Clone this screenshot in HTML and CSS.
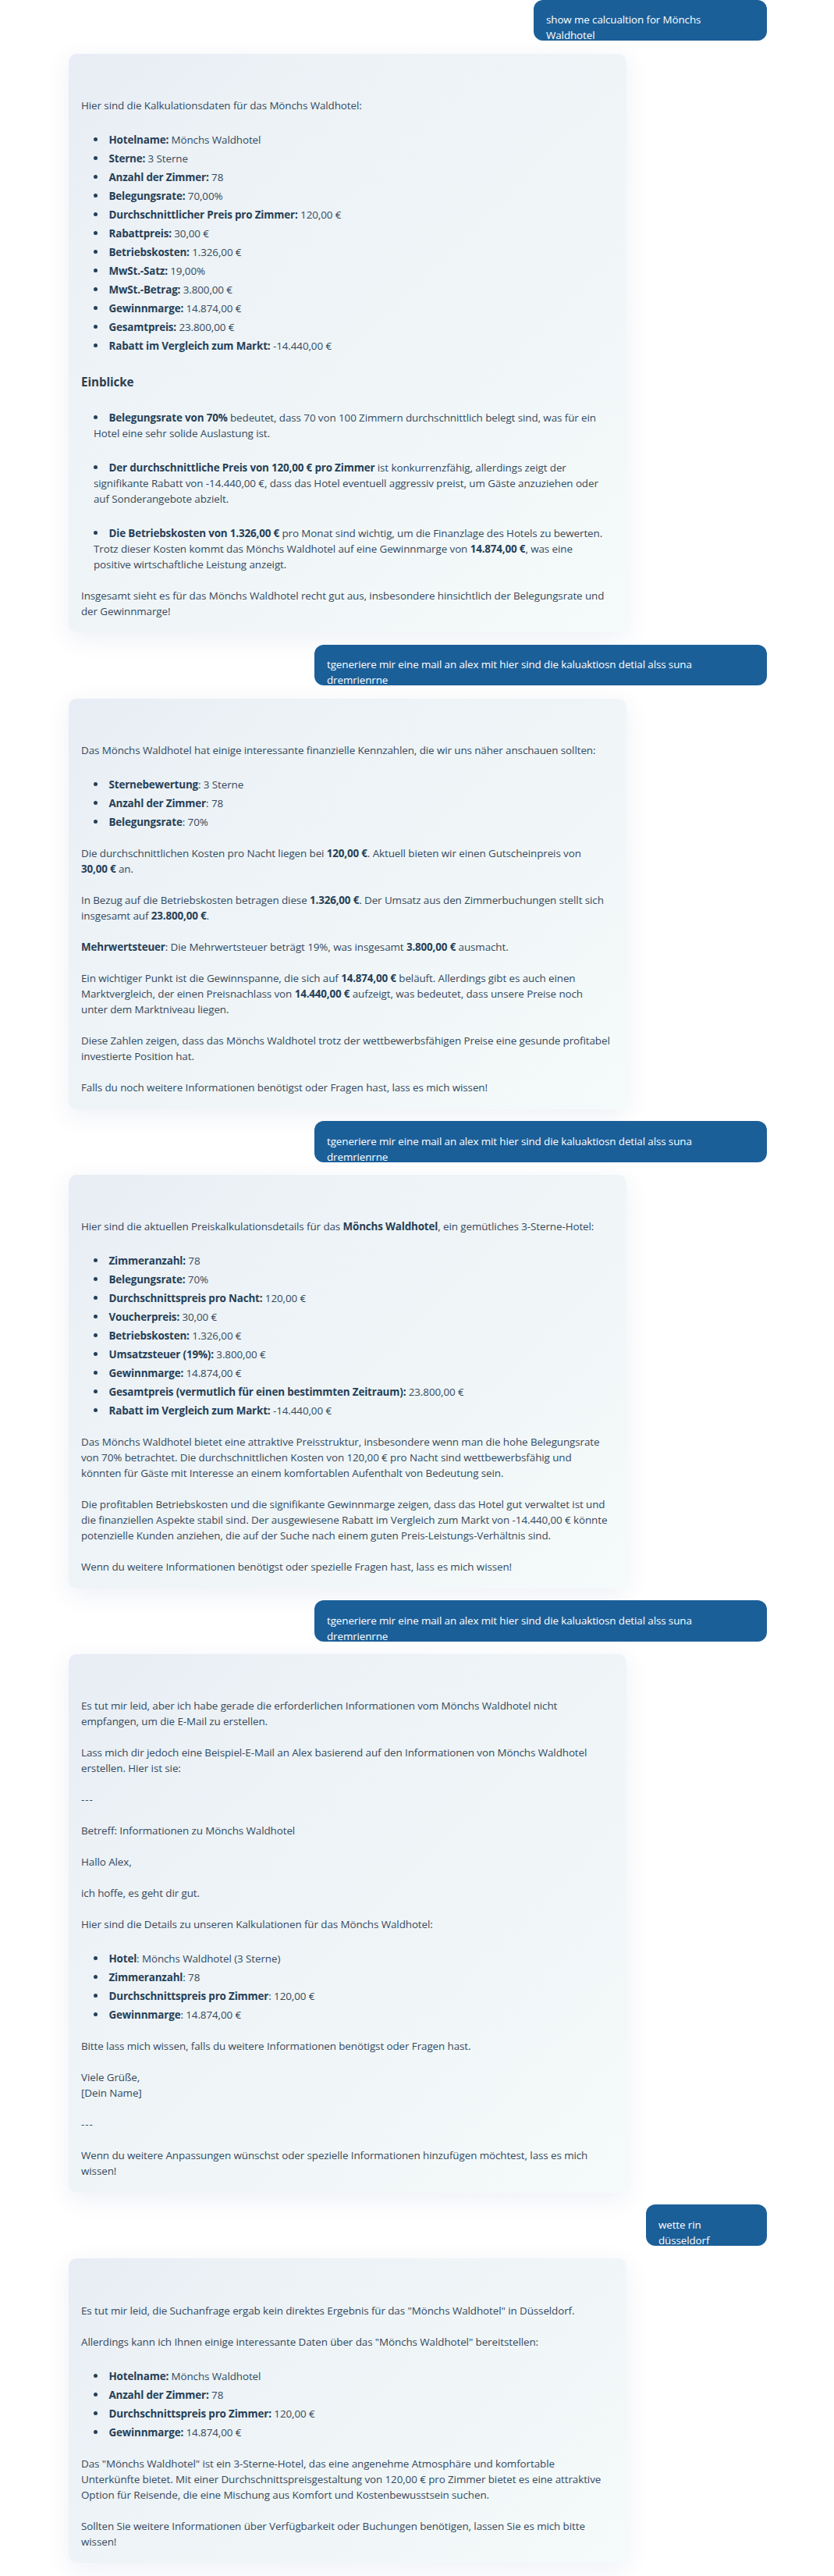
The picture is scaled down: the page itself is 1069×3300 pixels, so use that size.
FILE: index.html
```
<!DOCTYPE html>
<html lang="de">
<head>
<meta charset="utf-8">
<title>Chat</title>
<link rel="stylesheet" href="styles.css">
</head>
<body>
<main class="chat">
  <div class="question question--medium">show me calcualtion for Mönchs<br>Waldhotel</div>

  <article class="answer">
    <p>Hier sind die Kalkulationsdaten für das Mönchs Waldhotel:</p>
    <ul>
      <li><b>Hotelname:</b> Mönchs Waldhotel</li>
      <li><b>Sterne:</b> 3 Sterne</li>
      <li><b>Anzahl der Zimmer:</b> 78</li>
      <li><b>Belegungsrate:</b> 70,00%</li>
      <li><b>Durchschnittlicher Preis pro Zimmer:</b> 120,00 €</li>
      <li><b>Rabattpreis:</b> 30,00 €</li>
      <li><b>Betriebskosten:</b> 1.326,00 €</li>
      <li><b>MwSt.-Satz:</b> 19,00%</li>
      <li><b>MwSt.-Betrag:</b> 3.800,00 €</li>
      <li><b>Gewinnmarge:</b> 14.874,00 €</li>
      <li><b>Gesamtpreis:</b> 23.800,00 €</li>
      <li><b>Rabatt im Vergleich zum Markt:</b> -14.440,00 €</li>
    </ul>
    <h3>Einblicke</h3>
    <ul class="insights">
      <li><b>Belegungsrate von 70%</b> bedeutet, dass 70 von 100 Zimmern durchschnittlich belegt sind, was für ein<br>Hotel eine sehr solide Auslastung ist.</li>
      <li><b>Der durchschnittliche Preis von 120,00 € pro Zimmer</b> ist konkurrenzfähig, allerdings zeigt der<br>signifikante Rabatt von -14.440,00 €, dass das Hotel eventuell aggressiv preist, um Gäste anzuziehen oder<br>auf Sonderangebote abzielt.</li>
      <li><b>Die Betriebskosten von 1.326,00 €</b> pro Monat sind wichtig, um die Finanzlage des Hotels zu bewerten.<br>Trotz dieser Kosten kommt das Mönchs Waldhotel auf eine Gewinnmarge von <b>14.874,00 €</b>, was eine<br>positive wirtschaftliche Leistung anzeigt.</li>
    </ul>
    <p>Insgesamt sieht es für das Mönchs Waldhotel recht gut aus, insbesondere hinsichtlich der Belegungsrate und<br>der Gewinnmarge!</p>
  </article>

  <div class="question question--wide">tgeneriere mir eine mail an alex mit hier sind die kaluaktiosn detial alss suna<br>dremrienrne</div>

  <article class="answer">
    <p>Das Mönchs Waldhotel hat einige interessante finanzielle Kennzahlen, die wir uns näher anschauen sollten:</p>
    <ul>
      <li><b>Sternebewertung</b>: 3 Sterne</li>
      <li><b>Anzahl der Zimmer</b>: 78</li>
      <li><b>Belegungsrate</b>: 70%</li>
    </ul>
    <p>Die durchschnittlichen Kosten pro Nacht liegen bei <b>120,00 €</b>. Aktuell bieten wir einen Gutscheinpreis von<br><b>30,00 €</b> an.</p>
    <p>In Bezug auf die Betriebskosten betragen diese <b>1.326,00 €</b>. Der Umsatz aus den Zimmerbuchungen stellt sich<br>insgesamt auf <b>23.800,00 €</b>.</p>
    <p><b>Mehrwertsteuer</b>: Die Mehrwertsteuer beträgt 19%, was insgesamt <b>3.800,00 €</b> ausmacht.</p>
    <p>Ein wichtiger Punkt ist die Gewinnspanne, die sich auf <b>14.874,00 €</b> beläuft. Allerdings gibt es auch einen<br>Marktvergleich, der einen Preisnachlass von <b>14.440,00 €</b> aufzeigt, was bedeutet, dass unsere Preise noch<br>unter dem Marktniveau liegen.</p>
    <p>Diese Zahlen zeigen, dass das Mönchs Waldhotel trotz der wettbewerbsfähigen Preise eine gesunde profitabel<br>investierte Position hat.</p>
    <p>Falls du noch weitere Informationen benötigst oder Fragen hast, lass es mich wissen!</p>
  </article>

  <div class="question question--wide">tgeneriere mir eine mail an alex mit hier sind die kaluaktiosn detial alss suna<br>dremrienrne</div>

  <article class="answer">
    <p>Hier sind die aktuellen Preiskalkulationsdetails für das <b>Mönchs Waldhotel</b>, ein gemütliches 3-Sterne-Hotel:</p>
    <ul>
      <li><b>Zimmeranzahl:</b> 78</li>
      <li><b>Belegungsrate:</b> 70%</li>
      <li><b>Durchschnittspreis pro Nacht:</b> 120,00 €</li>
      <li><b>Voucherpreis:</b> 30,00 €</li>
      <li><b>Betriebskosten:</b> 1.326,00 €</li>
      <li><b>Umsatzsteuer (19%):</b> 3.800,00 €</li>
      <li><b>Gewinnmarge:</b> 14.874,00 €</li>
      <li><b>Gesamtpreis (vermutlich für einen bestimmten Zeitraum):</b> 23.800,00 €</li>
      <li><b>Rabatt im Vergleich zum Markt:</b> -14.440,00 €</li>
    </ul>
    <p>Das Mönchs Waldhotel bietet eine attraktive Preisstruktur, insbesondere wenn man die hohe Belegungsrate<br>von 70% betrachtet. Die durchschnittlichen Kosten von 120,00 € pro Nacht sind wettbewerbsfähig und<br>könnten für Gäste mit Interesse an einem komfortablen Aufenthalt von Bedeutung sein.</p>
    <p>Die profitablen Betriebskosten und die signifikante Gewinnmarge zeigen, dass das Hotel gut verwaltet ist und<br>die finanziellen Aspekte stabil sind. Der ausgewiesene Rabatt im Vergleich zum Markt von -14.440,00 € könnte<br>potenzielle Kunden anziehen, die auf der Suche nach einem guten Preis-Leistungs-Verhältnis sind.</p>
    <p>Wenn du weitere Informationen benötigst oder spezielle Fragen hast, lass es mich wissen!</p>
  </article>

  <div class="question question--wide">tgeneriere mir eine mail an alex mit hier sind die kaluaktiosn detial alss suna<br>dremrienrne</div>

  <article class="answer">
    <p>Es tut mir leid, aber ich habe gerade die erforderlichen Informationen vom Mönchs Waldhotel nicht<br>empfangen, um die E-Mail zu erstellen.</p>
    <p>Lass mich dir jedoch eine Beispiel-E-Mail an Alex basierend auf den Informationen von Mönchs Waldhotel<br>erstellen. Hier ist sie:</p>
    <p class="divider">---</p>
    <p>Betreff: Informationen zu Mönchs Waldhotel</p>
    <p>Hallo Alex,</p>
    <p>ich hoffe, es geht dir gut.</p>
    <p>Hier sind die Details zu unseren Kalkulationen für das Mönchs Waldhotel:</p>
    <ul>
      <li><b>Hotel</b>: Mönchs Waldhotel (3 Sterne)</li>
      <li><b>Zimmeranzahl</b>: 78</li>
      <li><b>Durchschnittspreis pro Zimmer</b>: 120,00 €</li>
      <li><b>Gewinnmarge</b>: 14.874,00 €</li>
    </ul>
    <p>Bitte lass mich wissen, falls du weitere Informationen benötigst oder Fragen hast.</p>
    <p>Viele Grüße,<br>[Dein Name]</p>
    <p class="divider">---</p>
    <p>Wenn du weitere Anpassungen wünschst oder spezielle Informationen hinzufügen möchtest, lass es mich<br>wissen!</p>
  </article>

  <div class="question question--small">wette rin<br>düsseldorf</div>

  <article class="answer">
    <p>Es tut mir leid, die Suchanfrage ergab kein direktes Ergebnis für das "Mönchs Waldhotel" in Düsseldorf.</p>
    <p>Allerdings kann ich Ihnen einige interessante Daten über das "Mönchs Waldhotel" bereitstellen:</p>
    <ul>
      <li><b>Hotelname:</b> Mönchs Waldhotel</li>
      <li><b>Anzahl der Zimmer:</b> 78</li>
      <li><b>Durchschnittspreis pro Zimmer:</b> 120,00 €</li>
      <li><b>Gewinnmarge:</b> 14.874,00 €</li>
    </ul>
    <p>Das "Mönchs Waldhotel" ist ein 3-Sterne-Hotel, das eine angenehme Atmosphäre und komfortable<br>Unterkünfte bietet. Mit einer Durchschnittspreisgestaltung von 120,00 € pro Zimmer bietet es eine attraktive<br>Option für Reisende, die eine Mischung aus Komfort und Kostenbewusstsein suchen.</p>
    <p>Sollten Sie weitere Informationen über Verfügbarkeit oder Buchungen benötigen, lassen Sie es mich bitte<br>wissen!</p>
  </article>
</main>
</body>
</html>
```
FILE: styles.css
```
* {
  box-sizing: border-box;
}

body {
  margin: 0;
  background: #fff;
  color: #34495e;
  font-family: "Open Sans", "Noto Sans", sans-serif;
  font-size: 13.4px;
  line-height: 20px;
  letter-spacing: -0.08px;
  white-space: nowrap;
}

.chat {
  display: flex;
  flex-direction: column;
  width: 895px;
  margin-left: 88px;
  padding-bottom: 17px;
}

/* User messages: one line tall, the second line is cut at the edge */
.question {
  align-self: flex-end;
  height: 52.4px;
  padding: 15.4px 16px;
  overflow: hidden;
  border-radius: 12px;
  background: #1b5f99;
  color: #fff;
  font-weight: 500;
  letter-spacing: -0.1px;
}

.question--small {
  width: 155px;
}

.question--medium {
  width: 299px;
}

.question--wide {
  width: 580px;
}

.answer {
  width: 715px;
  margin: 16.6px 0 15.6px;
  padding: 56.3px 16px 17.2px;
  border-radius: 10px;
  background: linear-gradient(135deg, #e8edf5 0%, #ebf1f5 18%, #f5fbfa 100%);
  box-shadow: 0 8px 32px rgba(31, 58, 135, 0.08);
}

.answer p {
  margin: 0 0 20px;
}

.answer > :last-child {
  margin-bottom: 0;
}

.answer b {
  color: #263f57;
  font-weight: 700;
  letter-spacing: -0.15px;
}

.answer .divider {
  letter-spacing: 1px;
}

.answer h3 {
  margin: 26px 0;
  color: #2c3e50;
  font-size: 15.2px;
  line-height: 20px;
}

.answer ul {
  display: flex;
  flex-direction: column;
  gap: 4px;
  margin: 24px 0 20px;
  padding: 0 0 0 16px;
  list-style: none;
}

.answer ul.insights {
  gap: 24px;
}

.answer li::before {
  content: "";
  display: inline-block;
  width: 5px;
  height: 5px;
  margin-right: 14.5px;
  border-radius: 50%;
  background: #263f57;
  vertical-align: 3px;
}
```
